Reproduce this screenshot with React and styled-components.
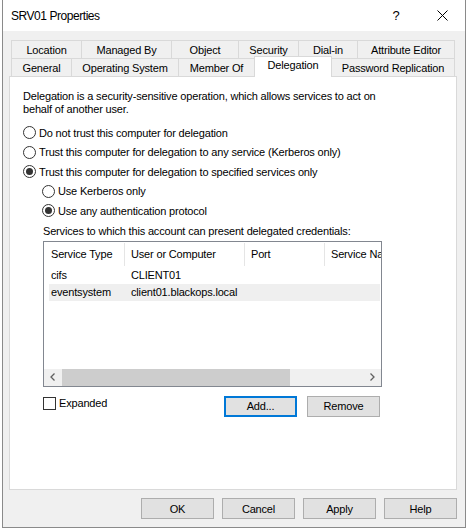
import React from 'react'
import styled, { createGlobalStyle } from 'styled-components'

const GlobalStyle = createGlobalStyle`
    html, body {
        margin: 0;
        padding: 0;
        background: #fff;
    }
    body {
        font-family: "Liberation Sans", Arial, sans-serif;
        font-size: 11px;
        letter-spacing: -0.17px;
        color: #000;
    }
`;

const Window = styled.div`
    margin-left: 2px;
    width: 464px;
    height: 528px;
    box-sizing: border-box;
    border: 1px solid #8a8a8a;
    border-top: none;
    display: flex;
    flex-direction: column;
    background: #f0f0f0;
`;

const TitleBar = styled.div`
    height: 31px;
    flex: none;
    display: flex;
    align-items: center;
    padding-left: 8px;
    background: #fff;
`;

const Title = styled.div`
    flex: 1;
    font-size: 12px;
    letter-spacing: -0.45px;
`;

const TitleButton = styled.div`
    width: 46px;
    height: 31px;
    display: flex;
    align-items: center;
    justify-content: center;
    font-size: 13px;
`;

const Body = styled.div`
    flex: 1;
    display: flex;
    flex-direction: column;
    padding: 9px 8px 8px 6px;
`;

const TabStrip = styled.div`
    margin: 0 2px;
`;

const TabRow = styled.div`
    display: flex;
    align-items: flex-end;
    height: 18px;
`;

const Tab = styled.div`
    flex: none;
    width: ${p => p.$w}px;
    height: ${p => (p.$active ? 21 : 18)}px;
    margin-bottom: ${p => (p.$active ? -1 : 0)}px;
    box-sizing: border-box;
    border: 1px solid #d9d9d9;
    border-bottom: none;
    background: ${p => (p.$active ? '#fff' : '#f0f0f0')};
    position: ${p => (p.$active ? 'relative' : 'static')};
    z-index: ${p => (p.$active ? 1 : 'auto')};
    display: flex;
    align-items: ${p => (p.$active ? 'flex-start' : 'center')};
    padding-top: ${p => (p.$active ? 2 : 0)}px;
    justify-content: center;
    white-space: nowrap;

    & + & {
        margin-left: -1px;
    }
`;

const Panel = styled.div`
    height: 414px;
    flex: none;
    box-sizing: border-box;
    border: 1px solid #d9d9d9;
    background: #fff;
    padding: 13px 0 0 13px;
    display: flex;
    flex-direction: column;
`;

const Description = styled.div`
    line-height: 13px;
`;

const Options = styled.div`
    margin-top: 7px;
    display: flex;
    flex-direction: column;
`;

const Option = styled.div`
    height: 19.5px;
    display: flex;
    align-items: center;
    gap: 3px;
    padding-left: ${p => p.$indent || 0}px;
`;

const RadioCircle = styled.span`
    width: 13px;
    height: 13px;
    box-sizing: border-box;
    border: 1px solid #333;
    border-radius: 50%;
    background: #fff;
    display: flex;
    align-items: center;
    justify-content: center;
    flex: none;
`;

const RadioDot = styled.span`
    width: 7px;
    height: 7px;
    border-radius: 50%;
    background: #333;
`;

const Indented = styled.div`
    padding-left: 20px;
    display: flex;
    flex-direction: column;
`;

const SectionLabel = styled.div`
    margin-top: 4px;
    line-height: 13px;
`;

const ListView = styled.div`
    margin-top: 3px;
    width: 339px;
    height: 146px;
    box-sizing: border-box;
    border: 1px solid #828790;
    background: #fff;
    display: flex;
    flex-direction: column;
    overflow: hidden;
`;

const ListHeader = styled.div`
    height: 25px;
    flex: none;
    display: grid;
    grid-template-columns: 81px 120px 80px 1fr;
`;

const HeaderCell = styled.div`
    display: flex;
    align-items: center;
    padding-left: ${p => p.$pad}px;
    border-right: ${p => (p.$last ? 'none' : '1px solid #e5e5e5')};
    margin: 1px 0;
    white-space: nowrap;
    overflow: hidden;
`;

const ListBody = styled.div`
    flex: 1;
`;

const ListRow = styled.div`
    margin: 0 1px 0 5px;
    height: 17px;
    display: grid;
    grid-template-columns: 76px 120px 80px 1fr;
    align-items: center;
    background: ${p => (p.$hover ? '#efefef' : 'transparent')};
`;

const RowCell = styled.div`
    padding-left: ${p => p.$pad}px;
    white-space: nowrap;
`;

const ScrollBar = styled.div`
    height: 17px;
    flex: none;
    display: flex;
    align-items: stretch;
    background: #f0f0f0;
`;

const ScrollArrow = styled.div`
    width: 17px;
    display: flex;
    align-items: center;
    justify-content: center;
    flex: none;
`;

const ScrollThumb = styled.div`
    width: 228px;
    margin: 0 0 0 1px;
    background: #cdcdcd;
`;

const ScrollTrack = styled.div`
    flex: 1;
`;

const ActionRow = styled.div`
    margin-top: 9px;
    width: 339px;
    padding-right: 2px;
    box-sizing: border-box;
    display: flex;
    align-items: flex-start;
`;

const CheckLabel = styled.label`
    margin-top: 1px;
    display: flex;
    align-items: center;
    gap: 3px;
`;

const CheckBox = styled.span`
    width: 13px;
    height: 13px;
    box-sizing: border-box;
    border: 1px solid #333;
    background: #fff;
    flex: none;
`;

const ButtonGroup = styled.div`
    margin-left: auto;
    display: flex;
    gap: ${p => p.$gap}px;
`;

const Button = styled.div`
    width: 73px;
    height: 21px;
    box-sizing: border-box;
    border: ${p => (p.$focused ? '2px solid #0078d7' : '1px solid #adadad')};
    background: #e1e1e1;
    display: flex;
    align-items: center;
    justify-content: center;
`;

const Footer = styled.div`
    margin-top: 8px;
    display: flex;
    justify-content: flex-end;
    gap: 8px;
`;

const Radio = ({ checked }) => (
    <RadioCircle>{checked && <RadioDot />}</RadioCircle>
)

const Chevron = ({ dir }) => (
    <svg width="5" height="8" viewBox="0 0 5 8">
        <polyline
            points={dir === 'left' ? '4.5,0.5 1,4 4.5,7.5' : '0.5,0.5 4,4 0.5,7.5'}
            fill="none"
            stroke="#606060"
            strokeWidth="1.3"
        />
    </svg>
)

const tabsTop = [
    ['Location', 71],
    ['Managed By', 91],
    ['Object', 68],
    ['Security', 61],
    ['Dial-in', 60],
    ['Attribute Editor', 98],
]

const tabsBottom = [
    ['General', 61],
    ['Operating System', 108],
    ['Member Of', 77],
    ['Delegation', 78],
    ['Password Replication', 124],
]

const services = [
    { type: 'cifs', host: 'CLIENT01' },
    { type: 'eventsystem', host: 'client01.blackops.local', hover: true },
]

export default function App() {
    return (
        <>
            <GlobalStyle />
            <Window>
                <TitleBar>
                    <Title>SRV01 Properties</Title>
                    <TitleButton>?</TitleButton>
                    <TitleButton>
                        <svg width="11" height="11" viewBox="0 0 11 11">
                            <path d="M0.5 0.5 L10.5 10.5 M10.5 0.5 L0.5 10.5" stroke="#000" strokeWidth="1" />
                        </svg>
                    </TitleButton>
                </TitleBar>

                <Body>
                    <TabStrip>
                        <TabRow>
                            {tabsTop.map(([label, w]) => <Tab key={label} $w={w}>{label}</Tab>)}
                        </TabRow>
                        <TabRow>
                            {tabsBottom.map(([label, w]) => (
                                <Tab key={label} $w={w} $active={label === 'Delegation'}>{label}</Tab>
                            ))}
                        </TabRow>
                    </TabStrip>

                    <Panel>
                        <Description>
                            Delegation is a security-sensitive operation, which allows services to act on<br />
                            behalf of another user.
                        </Description>

                        <Options>
                            <Option><Radio />Do not trust this computer for delegation</Option>
                            <Option><Radio />Trust this computer for delegation to any service (Kerberos only)</Option>
                            <Option><Radio checked />Trust this computer for delegation to specified services only</Option>
                            <Option $indent={19}><Radio />Use Kerberos only</Option>
                            <Option $indent={19}><Radio checked />Use any authentication protocol</Option>
                        </Options>

                        <Indented>
                            <SectionLabel>Services to which this account can present delegated credentials:</SectionLabel>
                            <ListView>
                                <ListHeader>
                                    <HeaderCell $pad={7}>Service Type</HeaderCell>
                                    <HeaderCell $pad={6}>User or Computer</HeaderCell>
                                    <HeaderCell $pad={6}>Port</HeaderCell>
                                    <HeaderCell $pad={6} $last>Service Name</HeaderCell>
                                </ListHeader>
                                <ListBody>
                                    {services.map(s => (
                                        <ListRow key={s.type} $hover={s.hover}>
                                            <RowCell $pad={2}>{s.type}</RowCell>
                                            <RowCell $pad={6}>{s.host}</RowCell>
                                            <RowCell $pad={6} />
                                            <RowCell $pad={6} />
                                        </ListRow>
                                    ))}
                                </ListBody>
                                <ScrollBar>
                                    <ScrollArrow><Chevron dir="left" /></ScrollArrow>
                                    <ScrollThumb />
                                    <ScrollTrack />
                                    <ScrollArrow><Chevron dir="right" /></ScrollArrow>
                                </ScrollBar>
                            </ListView>

                            <ActionRow>
                                <CheckLabel><CheckBox />Expanded</CheckLabel>
                                <ButtonGroup $gap={10}>
                                    <Button $focused>Add...</Button>
                                    <Button>Remove</Button>
                                </ButtonGroup>
                            </ActionRow>
                        </Indented>
                    </Panel>

                    <Footer>
                        <Button>OK</Button>
                        <Button>Cancel</Button>
                        <Button>Apply</Button>
                        <Button>Help</Button>
                    </Footer>
                </Body>
            </Window>
        </>
    )
}
